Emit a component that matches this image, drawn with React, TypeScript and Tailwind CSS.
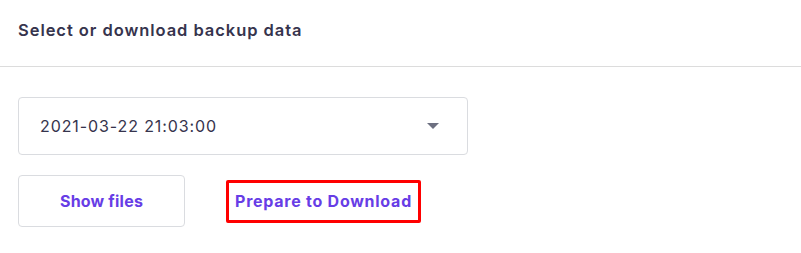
export default function App() {
  return (
    <div className="w-[801px] h-[253px] bg-white" style={{ fontFamily: 'Inter, "Noto Sans", sans-serif' }}>
      <div className="h-[67px] flex items-center px-[18px] pb-[6px] border-b border-[#dcdcdc]">
        <span className="text-[16.5px] font-semibold text-[#36344d] tracking-[0.95px]">Select or download backup data</span>
      </div>
      <div className="px-[18px] pt-[30px]">
        <div className="w-[450px] h-[58px] border border-[#dadce0] rounded-[4px] flex items-center justify-between pl-[21px] pr-[28px]">
          <span className="text-[16px] text-[#36344d] tracking-[0.9px]">2021-03-22 21:03:00</span>
          <svg width="12" height="6" viewBox="0 0 12 6">
            <path d="M0 0 L12 0 L6 6 Z" fill="#6d7081" />
          </svg>
        </div>
        <div className="flex items-center mt-[20px] gap-[41px]">
          <button className="w-[167px] h-[52px] border border-[#dadce0] rounded-[4px] text-[16px] font-bold text-[#673de6] tracking-[0.2px]">
            Show files
          </button>
          <div className="w-[195px] h-[43px] border-[3px] border-[#ff0000] rounded-[2px] flex items-center justify-center">
            <span className="text-[16px] font-bold text-[#673de6] tracking-[0.75px]">Prepare to Download</span>
          </div>
        </div>
      </div>
    </div>
  );
}
